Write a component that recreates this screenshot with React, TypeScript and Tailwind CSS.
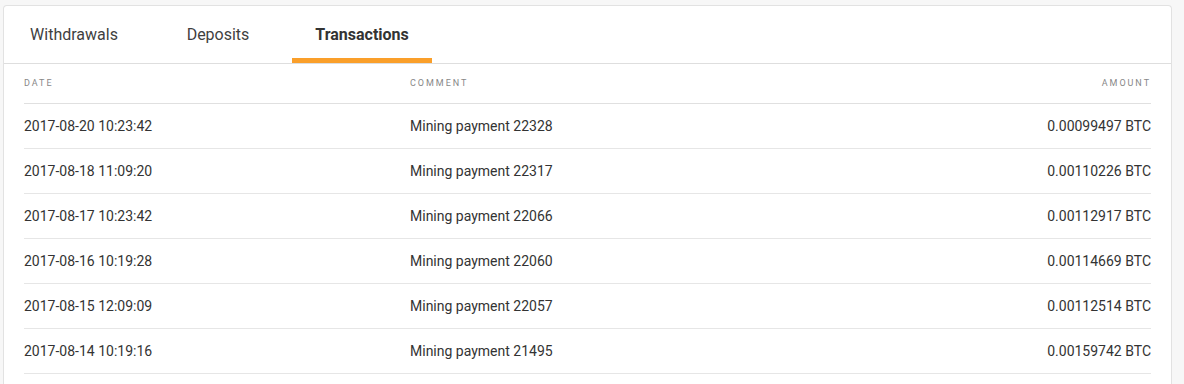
const rows = [
  { date: "2017-08-20 10:23:42", comment: "Mining payment 22328", amount: "0.00099497 BTC" },
  { date: "2017-08-18 11:09:20", comment: "Mining payment 22317", amount: "0.00110226 BTC" },
  { date: "2017-08-17 10:23:42", comment: "Mining payment 22066", amount: "0.00112917 BTC" },
  { date: "2017-08-16 10:19:28", comment: "Mining payment 22060", amount: "0.00114669 BTC" },
  { date: "2017-08-15 12:09:09", comment: "Mining payment 22057", amount: "0.00112514 BTC" },
  { date: "2017-08-14 10:19:16", comment: "Mining payment 21495", amount: "0.00159742 BTC" },
];

const tabs = ["Withdrawals", "Deposits", "Transactions"];

export default function App() {
  return (
    <div className="min-h-[384px] bg-[#f7f7f7] pl-[3px] pr-[12px] pt-[5px] font-['Roboto',sans-serif] text-[#333]">
      <div className="rounded-t-[4px] border border-b-0 border-[#e2e2e2] bg-white">
        {/* Tabs */}
        <div className="flex gap-[4px] border-b border-[#dedede]">
          {tabs.map((t) => {
            const active = t === "Transactions";
            return (
              <div
                key={t}
                className={
                  active
                    ? "flex h-[57px] w-[140px] items-center justify-center border-b-[5px] border-[#fa9f2a] pt-[5px] text-[16px] font-bold text-[#333]"
                    : "flex h-[57px] w-[140px] items-center justify-center border-b-[5px] border-transparent pt-[5px] text-[16px] text-[#3f3f3f]"
                }
              >
                {t}
              </div>
            );
          })}
        </div>

        {/* Table */}
        <div className="px-[20px]">
          <div className="flex h-[40px] items-center border-b border-[#e0e0e0] text-[9px] tracking-[0.22em] text-[#888]">
            <div className="w-[386px]">DATE</div>
            <div className="flex-1">COMMENT</div>
            <div className="text-right">AMOUNT</div>
          </div>
          {rows.map((r) => (
            <div key={r.date} className="flex h-[45px] items-center border-b border-[#e6e6e6] text-[14px]">
              <div className="w-[386px]">{r.date}</div>
              <div className="flex-1">{r.comment}</div>
              <div className="text-right">{r.amount}</div>
            </div>
          ))}
          <div className="h-[20px]" />
        </div>
      </div>
    </div>
  );
}
